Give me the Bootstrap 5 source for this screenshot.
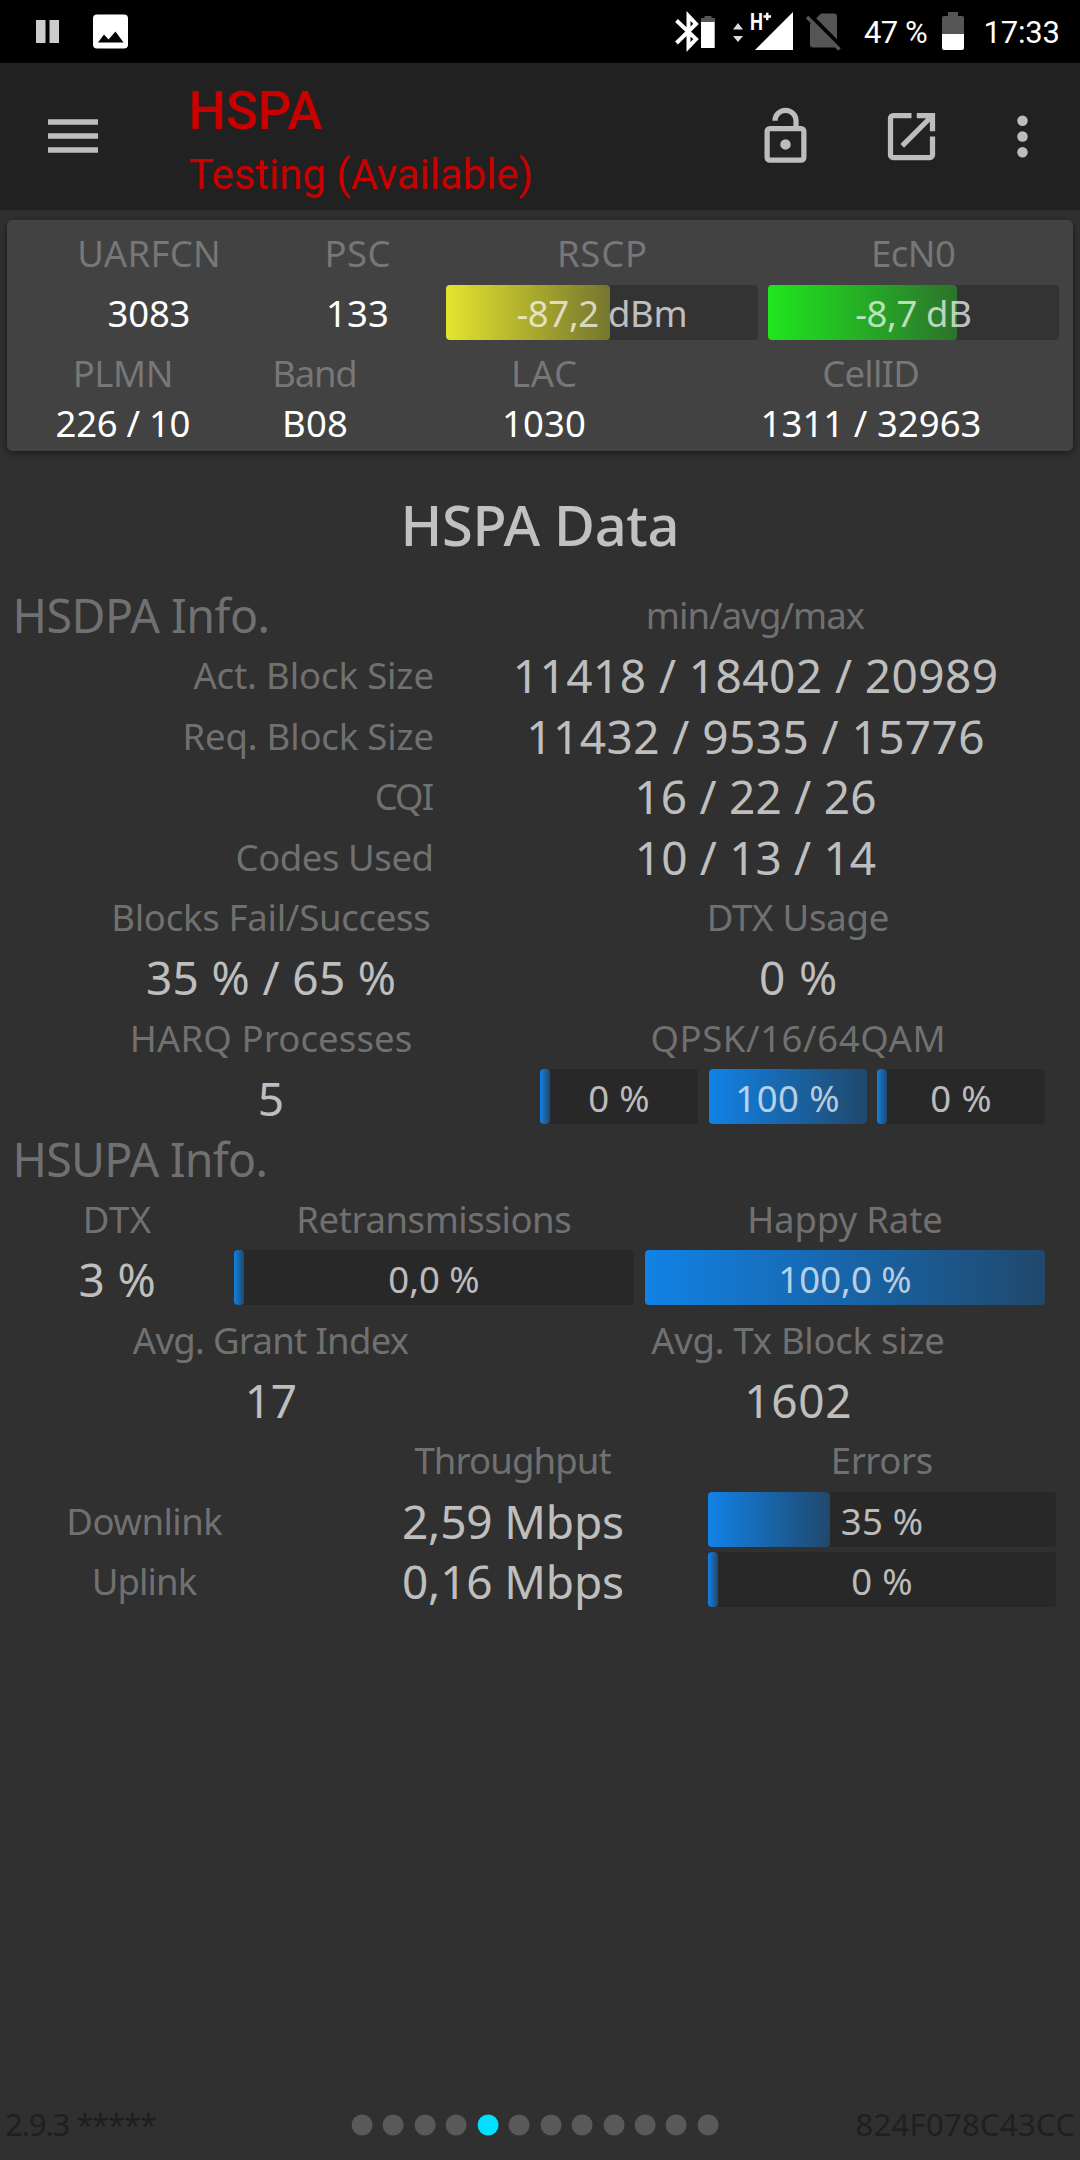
<!DOCTYPE html>
<html lang="en">
<head>
<meta charset="utf-8">
<meta name="viewport" content="width=device-width, initial-scale=1">
<title>HSPA Data</title>
<link href="https://cdn.jsdelivr.net/npm/bootstrap@5.3.0/dist/css/bootstrap.min.css" rel="stylesheet">
<style>
  body { background: #303030; color: rgba(255,255,255,.7); font-family: "Noto Sans", "Open Sans", sans-serif; }
  svg { display: block; flex: none; }
  .app-shell { width: 1080px; height: 2160px; overflow: hidden; }
  .status-bar { height: 63px; background: #000; color: #fff; font: 31px/1 Roboto, sans-serif; padding: 2px 20px 0 36px; }
  .status-bar svg { margin-top: -2px; }
  .tool-bar { height: 147px; background: #212121; padding-left: 48px; padding-right: 26px; }
  .tool-bar svg { fill: #bdbdbd; }
  .app-title { color: #c80000; font-family: Roboto, sans-serif; margin-left: 90.5px; margin-top: 20px; line-height: 56px; }
  .app-title .t1 { font-size: 53px; font-weight: 500; margin-bottom: 8px; }
  .app-title .t2 { font-size: 42px; }
  .fit { display: inline-block; white-space: pre; }
  .cell-card { width: 1066px; height: 231px; margin: 10px 0 0 7px; padding-top: 4px; background: #424242; border: 0; border-radius: 5px; box-shadow: 0 2px 7px rgba(0,0,0,.5); color: #fff; font-size: 36.5px; }
  .grid-line { display: grid; height: 60.4px; line-height: 58px; text-align: center; white-space: nowrap; }
  .cell-card .grid-line { height: 60px; }
  .cell-card .short-line { height: 40px; line-height: 38px; }
  .serving { grid-template-columns: 270px 147px 15px 312px 10px 291px; padding-left: 7px; }
  .serving > :nth-child(3) { grid-column: 4; }
  .serving > :nth-child(4) { grid-column: 6; }
  .ident { grid-template-columns: 232px 152px 306px 348px; }
  .lbl { font-size: 36.5px; color: rgba(255,255,255,.32); }
  .cell-card .lbl { color: rgba(255,255,255,.28); }
  .big { font-size: 46px; }
  .section-name { font-size: 46.5px; color: rgba(255,255,255,.32); text-align: left; padding-left: 12.5px; }
  .screen-title { font-size: 56px; font-weight: 500; line-height: 70px; margin: 38px 0 27px; text-align: center; }
  .info { grid-template-columns: 434px 643px; }
  .info > .lbl:first-child { text-align: right; }
  .halves { grid-template-columns: 542px 512px; }
  .uplink-cols { grid-template-columns: 234px 400px 11px 400px; }
  .uplink-cols > :nth-child(3) { grid-column: 4; }
  .through { grid-template-columns: 289px 448px 289px; }
  .through > :last-child { width: 348px; margin-left: -29px; }
  .qam { display: grid; grid-template-columns: 158px 158px 168px; column-gap: 10.5px; margin-left: -2px; }
  .meter { position: relative; height: 55px; background: #282828; border-radius: 4px; font-size: 36.5px; color: rgba(255,255,255,.7); }
  .cell-card .meter { background: #333; margin-top: 1px; line-height: 56px; }
  .meter > i { position: absolute; left: 0; top: 0; bottom: 0; border-radius: 4px; background: linear-gradient(90deg, #1182e6, #20486c); }
  .meter > i.yel { background: linear-gradient(90deg, #e4e42e, #75752f); }
  .meter > i.grn { background: linear-gradient(90deg, #20e61f, #2c732c); }
  .meter > .fit { position: relative; }
  .foot { height: 71px; color: #1f1f1f; font-size: 31px; line-height: 71px; padding: 0 5px; }
  .pager { gap: 10.45px; }
  .pager b { width: 21px; height: 21px; border-radius: 50%; background: #595959; }
  .pager b.on { background: #00dfff; }
</style>
</head>
<body>
<div class="app-shell d-flex flex-column">

  <header class="status-bar d-flex align-items-center">
    <svg width="92" height="63" viewBox="36 0 92 63">
      <path fill="#ccc" d="M36 20h9.500v23H36zM49.500 20h9.500v23h-9.500z"/>
      <rect x="93" y="14.500" width="35" height="34" rx="4" fill="#fff"/>
      <path d="M98 42.500l6-8 4.500 5 7-8 8 11z"/>
    </svg>
    <svg class="ms-auto" width="166" height="63" viewBox="675 0 166 63">
      <path d="M676.500 20.500L696 39l-7.500 8V16l7.500 8L676.500 43" fill="none" stroke="#fff" stroke-width="4"/>
      <path fill="#555" d="M701 22v-4h3.500v-2h7v2h3.500v4z"/><path fill="#fff" d="M701 22h13.700v26H701z"/>
      <path fill="#ddd" d="M733 29.500l5-6.500 5 6.500zM733 36h10l-5 6z"/>
      <path fill="#fff" d="M793 12v38h-38z"/>
      <text x="750" y="30" font-family="Roboto" font-weight="700" font-size="24" textLength="13" lengthAdjust="spacingAndGlyphs" fill="#fff">H</text>
      <path stroke="#fff" stroke-width="2.500" d="M763.500 16.500h7.500M767.200 12.700v7.500"/>
      <path fill="#555" d="M821 13.500h13q3 0 3 3v28q0 3-3 3h-21q-3 0-3-3V24z"/>
      <path d="M808 13l33 33" stroke="#000" stroke-width="4"/>
      <path d="M807 17l32.500 32.500" stroke="#555" stroke-width="3.500"/>
    </svg>
    <span class="fit" data-w="64" style="margin-left:23px">47 %</span>
    <svg style="margin-left:14px" width="22" height="63" viewBox="941 0 22 63">
      <path fill="#555" d="M941 34V18q0-2 2-2h4v-4h10v4h4q2 0 2 2v16z"/><path fill="#fff" d="M941 34h22v14q0 2-2 2h-18q-2 0-2-2z"/>
    </svg>
    <span class="fit" data-w="74" style="margin-left:20px">17:33</span>
  </header>

  <nav class="tool-bar d-flex align-items-center">
    <svg style="margin-top:-2px" width="50" height="34" viewBox="0 0 50 34"><path d="M0 .2h50v5.600H0zM0 14.200h50v5.600H0zM0 28.200h50v5.600H0z"/></svg>
    <div class="app-title align-self-start">
      <div class="t1"><span class="fit" data-w="132">HSPA</span></div>
      <div class="t2"><span class="fit" data-w="342">Testing (Available)</span></div>
    </div>
    <svg class="ms-auto" width="63" height="63" viewBox="0 0 24 24"><path d="M12 13a2 2 0 1 1 0 4 2 2 0 0 1 0-4zM18 20V10H6v10zM18 8a2 2 0 0 1 2 2v10a2 2 0 0 1-2 2H6a2 2 0 0 1-2-2V10a2 2 0 0 1 2-2h9V6a3 3 0 0 0-6 0H7a5 5 0 0 1 10 0v2z"/></svg>
    <svg style="margin-left:63px" width="63" height="63" viewBox="0 0 24 24"><path d="M14 3v2h3.590l-9.830 9.830 1.410 1.410L19 6.410V10h2V3M19 19H5V5h7V3H5a2 2 0 0 0-2 2v14a2 2 0 0 0 2 2h14a2 2 0 0 0 2-2v-7h-2z"/></svg>
    <svg style="margin-left:48px" width="63" height="63" viewBox="0 0 24 24"><circle cx="12" cy="6" r="2"/><circle cx="12" cy="12" r="2"/><circle cx="12" cy="18" r="2"/></svg>
  </nav>

  <section class="card cell-card flex-shrink-0">
    <div class="grid-line serving">
      <div class="lbl"><span class="fit" data-w="139">UARFCN</span></div>
      <div class="lbl"><span class="fit" data-w="63">PSC</span></div>
      <div class="lbl"><span class="fit" data-w="87">RSCP</span></div>
      <div class="lbl"><span class="fit" data-w="82">EcN0</span></div>
    </div>
    <div class="grid-line serving">
      <div><span class="fit" data-w="81">3083</span></div>
      <div><span class="fit" data-w="59">133</span></div>
      <div class="meter"><i class="yel" style="width:164px"></i><span class="fit" data-w="169">-87,2 dBm</span></div>
      <div class="meter"><i class="grn" style="width:189px"></i><span class="fit" data-w="115">-8,7 dB</span></div>
    </div>
    <div class="grid-line ident">
      <div class="lbl"><span class="fit" data-w="96">PLMN</span></div>
      <div class="lbl"><span class="fit" data-w="81">Band</span></div>
      <div class="lbl"><span class="fit" data-w="63">LAC</span></div>
      <div class="lbl"><span class="fit" data-w="95">CellID</span></div>
    </div>
    <div class="grid-line short-line ident">
      <div><span class="fit" data-w="134">226 / 10</span></div>
      <div><span class="fit" data-w="63">B08</span></div>
      <div><span class="fit" data-w="81">1030</span></div>
      <div><span class="fit" data-w="217">1311 / 32963</span></div>
    </div>
  </section>

  <main class="flex-shrink-0">
    <h1 class="screen-title"><span class="fit" data-w="271">HSPA Data</span></h1>

    <div class="grid-line info">
      <div class="section-name"><span class="fit" data-w="252">HSDPA Info.</span></div>
      <div class="lbl"><span class="fit" data-w="217">min/avg/max</span></div>
    </div>
    <div class="grid-line info">
      <div class="lbl"><span class="fit" data-w="240">Act. Block Size</span></div>
      <div class="big"><span class="fit" data-w="480">11418 / 18402 / 20989</span></div>
    </div>
    <div class="grid-line info">
      <div class="lbl"><span class="fit" data-w="248">Req. Block Size</span></div>
      <div class="big"><span class="fit" data-w="454">11432 / 9535 / 15776</span></div>
    </div>
    <div class="grid-line info">
      <div class="lbl"><span class="fit" data-w="57">CQI</span></div>
      <div class="big"><span class="fit" data-w="238">16 / 22 / 26</span></div>
    </div>
    <div class="grid-line info">
      <div class="lbl"><span class="fit" data-w="195">Codes Used</span></div>
      <div class="big"><span class="fit" data-w="238">10 / 13 / 14</span></div>
    </div>
    <div class="grid-line halves">
      <div class="lbl"><span class="fit" data-w="316">Blocks Fail/Success</span></div>
      <div class="lbl"><span class="fit" data-w="179">DTX Usage</span></div>
    </div>
    <div class="grid-line halves">
      <div class="big"><span class="fit" data-w="247">35 % / 65 %</span></div>
      <div class="big"><span class="fit" data-w="75">0 %</span></div>
    </div>
    <div class="grid-line halves">
      <div class="lbl"><span class="fit" data-w="279">HARQ Processes</span></div>
      <div class="lbl"><span class="fit" data-w="291">QPSK/16/64QAM</span></div>
    </div>
    <div class="grid-line halves">
      <div class="big"><span class="fit">5</span></div>
      <div class="qam">
        <div class="meter"><i style="width:10px"></i><span class="fit" data-w="60">0 %</span></div>
        <div class="meter"><i style="width:100%"></i><span class="fit" data-w="101">100 %</span></div>
        <div class="meter"><i style="width:10px"></i><span class="fit" data-w="60">0 %</span></div>
      </div>
    </div>
    <div class="grid-line">
      <div class="section-name"><span class="fit" data-w="250">HSUPA Info.</span></div>
    </div>
    <div class="grid-line uplink-cols">
      <div class="lbl"><span class="fit" data-w="67">DTX</span></div>
      <div class="lbl"><span class="fit" data-w="272">Retransmissions</span></div>
      <div class="lbl"><span class="fit" data-w="192">Happy Rate</span></div>
    </div>
    <div class="grid-line uplink-cols">
      <div class="big"><span class="fit" data-w="74">3 %</span></div>
      <div class="meter"><i style="width:10px"></i><span class="fit" data-w="90">0,0 %</span></div>
      <div class="meter"><i style="width:100%"></i><span class="fit" data-w="130">100,0 %</span></div>
    </div>
    <div class="grid-line halves">
      <div class="lbl"><span class="fit" data-w="277">Avg. Grant Index</span></div>
      <div class="lbl"><span class="fit" data-w="293">Avg. Tx Block size</span></div>
    </div>
    <div class="grid-line halves">
      <div class="big"><span class="fit" data-w="48">17</span></div>
      <div class="big"><span class="fit" data-w="102">1602</span></div>
    </div>
    <div class="grid-line through">
      <div></div>
      <div class="lbl"><span class="fit" data-w="198">Throughput</span></div>
      <div class="lbl"><span class="fit" data-w="99">Errors</span></div>
    </div>
    <div class="grid-line through">
      <div class="lbl"><span class="fit" data-w="155">Downlink</span></div>
      <div class="big"><span class="fit" data-w="219">2,59 Mbps</span></div>
      <div class="meter"><i style="width:35%"></i><span class="fit" data-w="81">35 %</span></div>
    </div>
    <div class="grid-line through">
      <div class="lbl"><span class="fit" data-w="104">Uplink</span></div>
      <div class="big"><span class="fit" data-w="219">0,16 Mbps</span></div>
      <div class="meter"><i style="width:10px"></i><span class="fit" data-w="60">0 %</span></div>
    </div>
  </main>

  <footer class="foot mt-auto d-flex justify-content-between flex-shrink-0 position-relative">
    <span class="fit" data-w="151">2.9.3 *****</span>
    <div class="pager d-flex position-absolute top-50 start-50 translate-middle" style="margin-left:-5px">
      <b></b><b></b><b></b><b></b><b class="on"></b><b></b><b></b><b></b><b></b><b></b><b></b><b></b>
    </div>
    <span class="fit" data-w="219">824F078C43CC</span>
  </footer>
</div>

<script src="https://cdn.jsdelivr.net/npm/bootstrap@5.3.0/dist/js/bootstrap.bundle.min.js"></script>
<script>
  // Track each label out (or in) so that its ink spans data-w pixels.
  const pen = document.createElement('canvas').getContext('2d');
  document.querySelectorAll('.fit[data-w]').forEach(el => {
    const cs = getComputedStyle(el), s = el.textContent;
    pen.font = `${cs.fontWeight} ${cs.fontSize} ${cs.fontFamily}`;
    const m = pen.measureText(s);
    const gap = (el.dataset.w - 1 - m.actualBoundingBoxLeft - m.actualBoundingBoxRight) / (s.length - 1);
    el.style.letterSpacing = gap + 'px';
    el.style.marginRight = -gap + 'px';
  });
</script>
</body>
</html>
